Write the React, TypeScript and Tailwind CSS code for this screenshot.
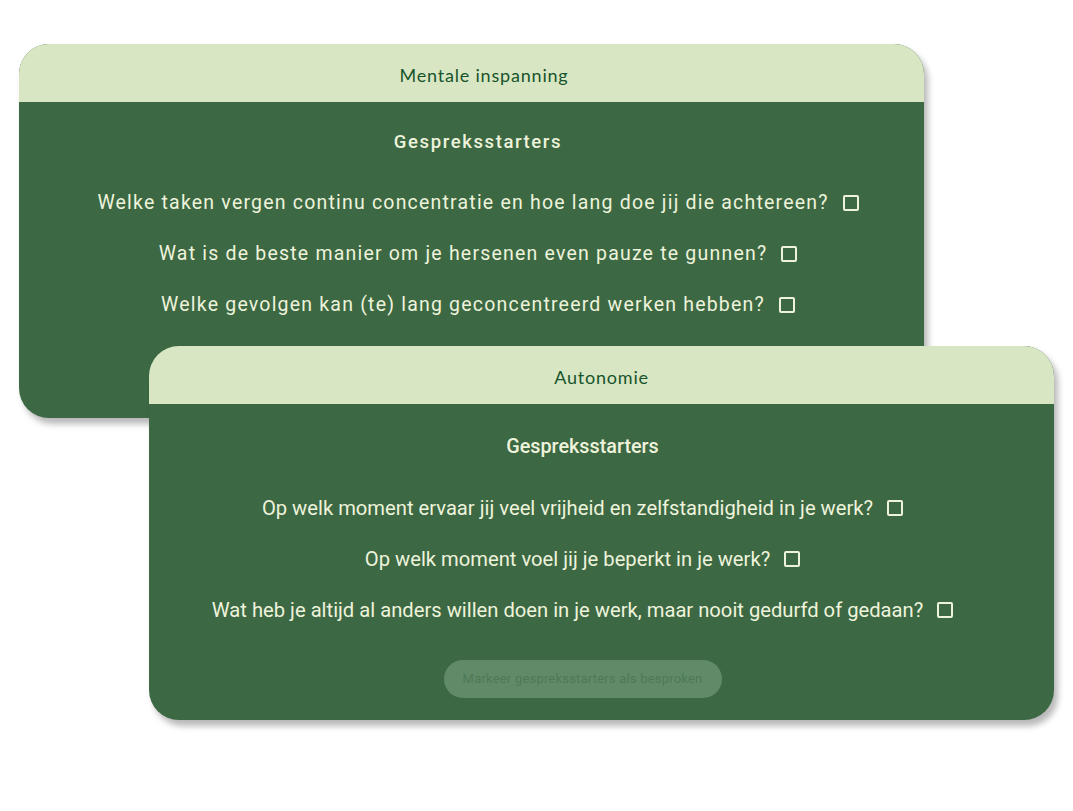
import React from "react";

type Card = {
  title: string;
  questions: string[];
};

const CARDS: Card[] = [
  {
    title: "Mentale inspanning",
    questions: [
      "Welke taken vergen continu concentratie en hoe lang doe jij die achtereen?",
      "Wat is de beste manier om je hersenen even pauze te gunnen?",
      "Welke gevolgen kan (te) lang geconcentreerd werken hebben?",
    ],
  },
  {
    title: "Autonomie",
    questions: [
      "Op welk moment ervaar jij veel vrijheid en zelfstandigheid in je werk?",
      "Op welk moment voel jij je beperkt in je werk?",
      "Wat heb je altijd al anders willen doen in je werk, maar nooit gedurfd of gedaan?",
    ],
  },
];

type Look = {
  header: string;
  body: string;
  heading: string;
  question: string;
  list: string;
};

const LOOKS: Look[] = [
  {
    header: "pl-[25px]",
    body: "pl-[13px] pt-[28px]",
    heading: "text-[18.5px] tracking-[1.6px]",
    question: "text-[19.5px] tracking-[1.2px]",
    list: "mt-[37px]",
  },
  {
    header: "",
    body: "pr-[38px] pt-[31px]",
    heading: "text-[19.8px]",
    question: "text-[20.2px]",
    list: "mt-[37px]",
  },
];

function TopicCard({ card, look, showButton }: { card: Card; look: Look; showButton: boolean }) {
  return (
    <div className="flex h-[374px] w-[905px] flex-col overflow-hidden rounded-[30px] bg-[#3c6843] shadow-[4px_6px_6px_rgba(0,0,0,0.28)]">
      <div
        className={`flex h-[58px] shrink-0 items-center justify-center bg-[#d9e6c3] pt-[4px] text-[18px] tracking-[0.8px] text-[#17542c] ${look.header}`}
        style={{ fontFamily: "Lato, 'Noto Sans', sans-serif" }}
      >
        {card.title}
      </div>
      <div
        className={`flex flex-1 flex-col items-center text-[#eef3dc] ${look.body}`}
        style={{ fontFamily: "Roboto, 'Noto Sans', sans-serif" }}
      >
        <h2 className={`font-medium leading-[24px] ${look.heading}`}>Gespreksstarters</h2>
        <div className={`flex flex-col items-center gap-[27px] ${look.list}`}>
          {card.questions.map((q) => (
            <label key={q} className={`flex items-center gap-[14px] leading-[24px] ${look.question}`}>
              <span>{q}</span>
              <span className="h-[16px] w-[16px] rounded-[2px] border-2 border-[#eef3dc]" />
            </label>
          ))}
        </div>
        {showButton && (
          <button
            type="button"
            className="mt-[38px] h-[38px] w-[278px] rounded-full bg-[#618a69] text-[13px] tracking-[0.2px] text-[#4d7a56]"
          >
            Markeer gespreksstarters als besproken
          </button>
        )}
      </div>
    </div>
  );
}

export default function App() {
  return (
    <div className="min-h-[811px] w-[1073px] bg-white pl-[19px] pt-[44px]">
      <div className="relative z-0">
        <TopicCard card={CARDS[0]} look={LOOKS[0]} showButton={false} />
      </div>
      <div className="relative z-10 -mt-[72px] ml-[130px]">
        <TopicCard card={CARDS[1]} look={LOOKS[1]} showButton />
      </div>
    </div>
  );
}
